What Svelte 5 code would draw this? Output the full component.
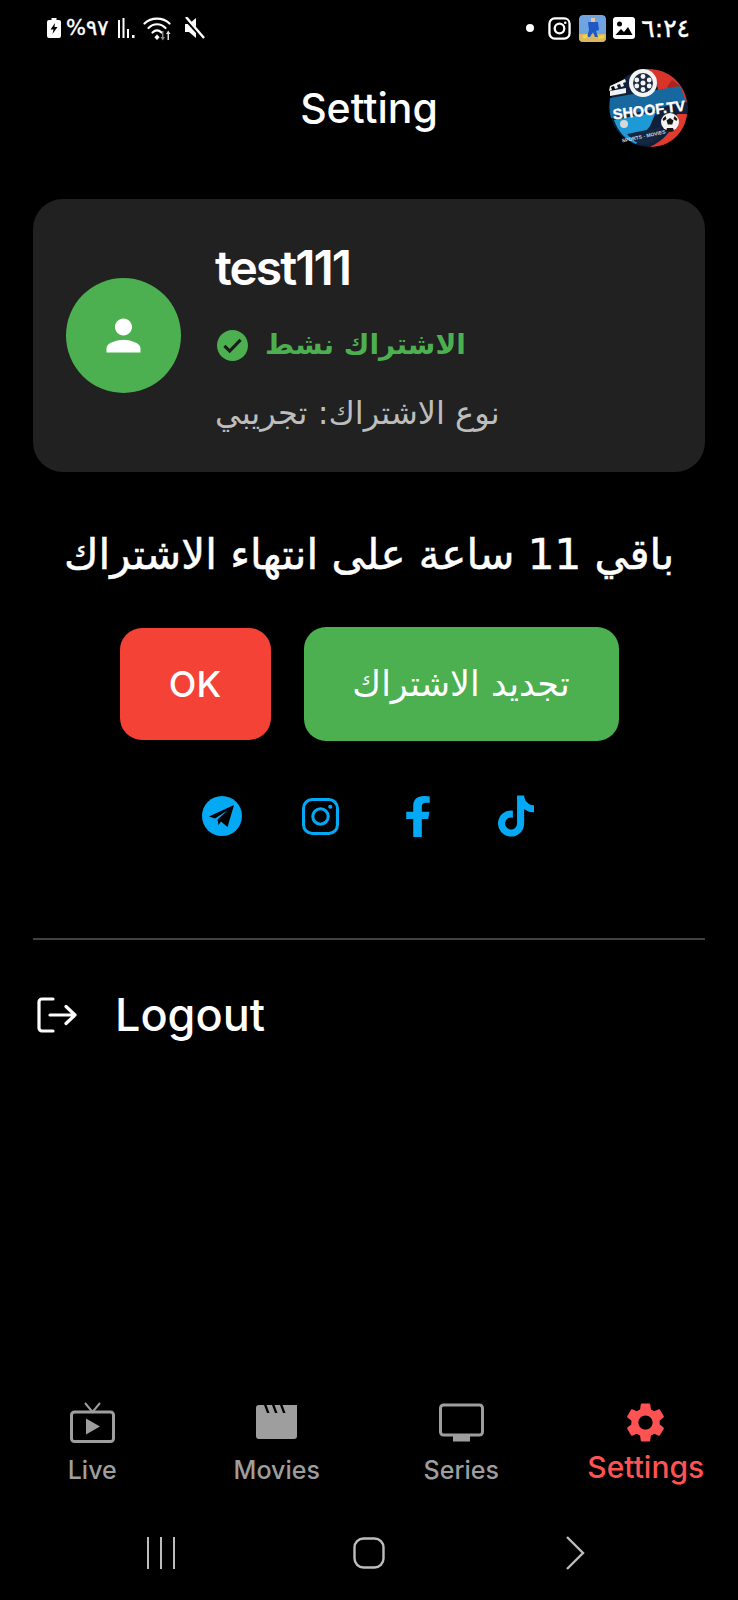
<script lang="ts">
  const tabs = [
    { id: 'live', label: 'Live' },
    { id: 'movies', label: 'Movies' },
    { id: 'series', label: 'Series' },
    { id: 'settings', label: 'Settings' }
  ];
  let active = $state('settings');
</script>

<div class="page">
  <div class="status">
    <div class="status-side">
      <svg class="batt" viewBox="0 0 14 20" aria-hidden="true">
        <path fill="#fff" d="M4.500 0h5v2H12a2 2 0 0 1 2 2v14a2 2 0 0 1-2 2H2a2 2 0 0 1-2-2V4a2 2 0 0 1 2-2h2.500z" />
        <path fill="#000" d="M8 5 3.500 11.500H6.500L5.500 16 10.500 9H7.500z" />
      </svg>
      <span class="pct">%٩٧</span>
      <svg class="sig" viewBox="0 0 18 20" aria-hidden="true">
        <path fill="#fff" d="M0 2h2v18H0zM4.500 0h2v20h-2zM9 11h2v9H9zM14 17h2.500v3H14z" />
      </svg>
      <svg class="wifi" viewBox="0 0 32 26" aria-hidden="true">
        <g fill="none" stroke="#fff" stroke-width="2.200" stroke-linecap="round">
          <path d="M1.500 8.500C8 2 20 2 26.500 8.500" />
          <path d="M5.500 13C10.500 8 17.500 8 22.500 13" />
          <path d="M9.500 17.500c3-2.800 6-2.800 9 0" />
        </g>
        <path fill="#fff" d="M14 19.500l2.600 2.800-2.600 2.700-2.600-2.700z" />
        <path fill="#888" d="M19 16h1.500v6h1.500l-2.200 3.500L17.500 22H19z" />
        <path fill="#ddd" d="M26 25h-1.500v-6H23l2.200-3.500 2.300 3.500H26z" />
      </svg>
      <svg class="mute" viewBox="0 0 22 22" aria-hidden="true">
        <path fill="#fff" d="M2 7h4l7-6v20l-7-6H2z" />
        <path stroke="#000" stroke-width="4" d="M1 0l20 22" />
        <path stroke="#fff" stroke-width="2.400" d="M3 0l18 21" />
      </svg>
    </div>
    <div class="status-side">
      <span class="dot"></span>
      <svg class="sb-insta" viewBox="0 0 24 24" aria-hidden="true">
        <rect x="1.500" y="1.500" width="21" height="21" rx="5.500" fill="none" stroke="#fff" stroke-width="2.400" />
        <circle cx="12" cy="12" r="5" fill="none" stroke="#fff" stroke-width="2.400" />
        <circle cx="18" cy="6" r="1.300" fill="#fff" />
      </svg>
      <svg class="thumb" viewBox="0 0 27 27" aria-hidden="true">
        <rect width="27" height="27" rx="4" fill="#6fa4e0" />
        <rect y="19" width="27" height="8" fill="#d9b860" />
        <path fill="#e8c8a0" d="M12 3h4v4h-4z" />
        <path fill="#1f58c4" d="M9 7h10l1 8-3 1 2 6h-3l-2-5-3 5H8l2-7z" />
        <path fill="#f3d34a" d="M3 21l5-2 1 3-4 2zM19 21l6-1v3l-5 1z" />
      </svg>
      <svg class="pic" viewBox="0 0 22 22" aria-hidden="true">
        <rect width="22" height="22" rx="3" fill="#fff" />
        <circle cx="6.500" cy="7" r="2.500" fill="#000" />
        <path fill="#000" d="M2.500 18l5.500-6 3 3 4-5 4.500 8z" />
      </svg>
      <span class="clock">٦:٢٤</span>
    </div>
  </div>

  <header class="top">
    <span></span>
    <h1>Setting</h1>
    <svg class="logo" viewBox="0 0 82 84" aria-label="Shoof TV">
      <circle cx="41" cy="42" r="39" fill="#10203a" />
      <path fill="#d9332a" d="M38 3c22-1 38 14 41 33L50 38C52 22 48 10 38 3z" />
      <path fill="#e23a2c" d="M79 48c-2 18-16 33-37 33 13-6 24-17 27-33z" />
      <path fill="#a92420" d="M64 14l8 6-5 6-8-5z" />
      <path fill="#17689f" d="M2 32l70-12 6 16-75 16c-2-7-2-13-1-20z" />
      <path fill="#1d9ad6" d="M6 54l42-8-6 14-14 18C18 74 10 66 6 54z" />
      <path fill="#142640" d="M19 68l34-7-3 12-12 6c-8-1-14-5-19-11z" />
      <circle cx="35" cy="17" r="14" fill="#f4f4f4" />
      <circle cx="35" cy="17" r="10" fill="#1b2a40" />
      <g fill="#f4f4f4">
        <circle cx="35" cy="17" r="2.500" />
        <circle cx="35" cy="10.500" r="2.400" />
        <circle cx="35" cy="23.500" r="2.400" />
        <circle cx="28.800" cy="14" r="2.400" />
        <circle cx="41.200" cy="14" r="2.400" />
        <circle cx="28.800" cy="20" r="2.400" />
        <circle cx="41.200" cy="20" r="2.400" />
      </g>
      <path fill="#f1f1f1" d="M2 20l15-7 1 3-3 1 1 3-3 1-1-3-3 1 1 3-3 1-1-3-3 1 1 3-3 1zM2 25l16-3v5L2 30z" />
      <circle cx="16" cy="58" r="4" fill="#d8d8d8" />
      <circle cx="62" cy="56" r="9" fill="#f4f4f4" />
      <path fill="#151515" d="M62 52l3.500 2.500-1.300 4h-4.400l-1.300-4zM54.500 53l3-3 1 3-3 2zM69.500 53l-3-3-1 3 3 2zM58 65l1-3h6l1 3-4 1z" />
      <text class="logo-text" x="41" y="49" transform="rotate(-7 41 44)" text-anchor="middle">SHOOF.TV</text>
      <text class="logo-sub" x="36" y="72" transform="rotate(-12 36 72)" text-anchor="middle">SPORTS - MOVIES</text>
    </svg>
  </header>

  <section class="card">
    <div class="avatar">
      <svg viewBox="0 0 24 24" aria-hidden="true">
        <path fill="#fff" d="M12 12c2.210 0 4-1.790 4-4s-1.790-4-4-4-4 1.790-4 4 1.790 4 4 4zm0 2c-2.670 0-8 1.340-8 4v2h16v-2c0-2.660-5.330-4-8-4z" />
      </svg>
    </div>
    <div class="info">
      <div class="name">test111</div>
      <div class="state">
        <svg viewBox="2 2 20 20" aria-hidden="true">
          <path fill="#4caf50" d="M12 2C6.480 2 2 6.480 2 12s4.480 10 10 10 10-4.480 10-10S17.520 2 12 2z" />
          <path fill="none" stroke="#1c1c1c" stroke-width="2" d="M6.800 12.200l3.400 3.400 7-7.200" />
        </svg>
        <span dir="rtl">الاشتراك نشط</span>
      </div>
      <div class="kind" dir="rtl">نوع الاشتراك: تجريبي</div>
    </div>
  </section>

  <p class="remain" dir="rtl">باقي 11 ساعة على انتهاء الاشتراك</p>

  <div class="actions">
    <button type="button" class="ok">OK</button>
    <button type="button" class="renew" dir="rtl">تجديد الاشتراك</button>
  </div>

  <div class="social">
    <svg class="s-tg" viewBox="0 0 40 40" aria-label="Telegram">
      <circle cx="20" cy="20" r="20" fill="#03a9f4" />
      <path fill="#000" d="M7 20.500 32 9 25.500 31 19 25.500 16.500 29 15.500 23.500 26 14 13 22.500z" />
    </svg>
    <svg class="s-ig" viewBox="0 0 36 36" aria-label="Instagram">
      <rect x="1.500" y="1.500" width="33" height="33" rx="8.500" fill="none" stroke="#03a9f4" stroke-width="3" />
      <circle cx="18" cy="18" r="7.500" fill="none" stroke="#03a9f4" stroke-width="3" />
      <circle cx="27.500" cy="8.500" r="2" fill="#03a9f4" />
    </svg>
    <svg class="s-fb" viewBox="20 0 280 512" preserveAspectRatio="none" aria-label="Facebook">
      <path fill="#03a9f4" d="M279.140 288l14.220-92.660h-88.910v-60.130c0-25.350 12.420-50.060 52.240-50.060h40.420V6.260S260.430 0 225.360 0c-73.220 0-121.080 44.380-121.080 124.720v70.620H22.890V288h81.390v224h100.170V288z" />
    </svg>
    <svg class="s-tt" viewBox="0 0 448 512" aria-label="TikTok">
      <path fill="#03a9f4" d="M448 209.910a210.060 210.060 0 0 1-122.770-39.250V349.380A162.550 162.550 0 1 1 185 188.310V278.200a74.620 74.620 0 1 0 52.230 71.180V0l88 0a121.180 121.180 0 0 0 1.860 22.170h0A122.180 122.180 0 0 0 381 102.390a121.430 121.430 0 0 0 67 20.140Z" />
    </svg>
  </div>

  <hr />

  <button type="button" class="logout">
    <svg viewBox="0 0 40 36" aria-hidden="true">
      <g fill="none" stroke="#fff" stroke-width="3.200" stroke-linecap="round" stroke-linejoin="round">
        <path d="M16 2H5a3 3 0 0 0-3 3v26a3 3 0 0 0 3 3h11" />
        <path d="M13 18h25M29 9.500l9 8.500-9 8.500" />
      </g>
    </svg>
    <span>Logout</span>
  </button>

  <nav class="tabs">
    {#each tabs as tab}
      <button type="button" class="tab" class:on={active === tab.id} onclick={() => (active = tab.id)}>
        {#if tab.id === 'live'}
          <svg viewBox="0 0 45 41" aria-hidden="true">
            <path fill="none" stroke="currentColor" stroke-width="2" d="M15 1l7.500 9L30 1" />
            <rect x="1.500" y="10" width="42" height="29.500" rx="3" fill="none" stroke="currentColor" stroke-width="3" />
            <path fill="currentColor" d="M16 16.500l14 8-14 8z" />
          </svg>
        {:else if tab.id === 'movies'}
          <svg viewBox="-2 -3 45 41" aria-hidden="true">
            <path fill="currentColor" d="M3 0H8L11 8H13.500L10.500 0H16L19 8H21.500L18.500 0H24L27 8H29.500L26.500 0H41V31a3 3 0 0 1-3 3H3a3 3 0 0 1-3-3V3a3 3 0 0 1 3-3z" />
          </svg>
        {:else if tab.id === 'series'}
          <svg viewBox="0 0 45 38" aria-hidden="true">
            <rect x="1.500" y="1.500" width="42" height="30" rx="3" fill="none" stroke="currentColor" stroke-width="3" />
            <rect x="14" y="32" width="17" height="6" fill="currentColor" />
          </svg>
        {:else}
          <svg viewBox="2.300 1.600 19.400 20.800" aria-hidden="true">
            <path fill="currentColor" d="M19.140 12.940c.04-.3.06-.61.06-.94 0-.32-.02-.64-.07-.94l2.030-1.580c.18-.14.23-.41.12-.61l-1.920-3.320c-.12-.22-.37-.29-.59-.22l-2.390.96c-.5-.38-1.030-.7-1.620-.94l-.36-2.540c-.04-.24-.24-.41-.48-.41h-3.840c-.24 0-.43.17-.47.41l-.36 2.540c-.59.24-1.130.57-1.620.94l-2.390-.96c-.22-.08-.47 0-.59.22L2.740 8.870c-.12.21-.08.47.12.61l2.030 1.580c-.05.3-.09.63-.09.94s.02.64.07.94l-2.030 1.580c-.18.14-.23.41-.12.61l1.920 3.320c.12.22.37.29.59.22l2.390-.96c.5.38 1.030.7 1.620.94l.36 2.540c.05.24.24.41.48.41h3.840c.24 0 .44-.17.47-.41l.36-2.540c.59-.24 1.130-.56 1.620-.94l2.390.96c.22.08.47 0 .59-.22l1.920-3.320c.12-.22.07-.47-.12-.61l-2.010-1.580zM12 15.600c-1.980 0-3.600-1.620-3.600-3.600s1.620-3.600 3.600-3.600 3.600 1.620 3.600 3.600-1.620 3.600-3.600 3.600z" />
          </svg>
        {/if}
        <span>{tab.label}</span>
      </button>
    {/each}
  </nav>

  <div class="sysnav">
    <svg class="sys-bars" viewBox="0 0 30 32" aria-hidden="true">
      <path stroke="#bdbdbd" stroke-width="2" d="M2 0v32M15 0v32M28 0v32" />
    </svg>
    <svg class="sys-home" viewBox="0 0 32 32" aria-hidden="true">
      <rect x="1.500" y="1.500" width="29" height="29" rx="9" fill="none" stroke="#bdbdbd" stroke-width="2.400" />
    </svg>
    <svg class="sys-back" viewBox="0 0 20 34" aria-hidden="true">
      <path fill="none" stroke="#bdbdbd" stroke-width="2.400" d="M2 1l16 16L2 33" />
    </svg>
  </div>
</div>

<style>
  :global(body) {
    margin: 0;
    background: #000;
  }

  .page {
    display: flex;
    flex-direction: column;
    height: 1600px;
    width: 738px;
    background: #000;
    color: #fff;
    font-family: Inter, 'DejaVu Sans', sans-serif;
    overflow: hidden;
  }

  .status {
    display: flex;
    justify-content: space-between;
    align-items: center;
    height: 56px;
    padding: 0 48px 0 47px;
  }
  .status-side {
    display: flex;
    align-items: center;
  }
  .batt { width: 14px; height: 20px; margin-right: 5px; }
  .pct, .clock {
    font-family: 'DejaVu Sans', sans-serif;
    font-size: 21px;
    line-height: 1;
    -webkit-text-stroke: 0.4px #fff;
  }
  .sig { width: 18px; height: 20px; margin: 0 7px 0 9px; }
  .wifi { width: 32px; height: 26px; }
  .mute { width: 22px; height: 22px; margin-left: 8px; }
  .dot { width: 8px; height: 8px; border-radius: 50%; background: #fff; margin-right: 14px; }
  .sb-insta { width: 23px; height: 23px; }
  .thumb { width: 27px; height: 27px; margin-left: 8px; border-radius: 4px; }
  .pic { width: 22px; height: 22px; margin-left: 7px; }
  .clock { margin-left: 6px; font-size: 25px; }

  .top {
    display: grid;
    grid-template-columns: 1fr auto 1fr;
    align-items: center;
    height: 104px;
    padding: 0 48px;
  }
  .top h1 {
    margin: 0;
    font-size: 41px;
    font-weight: 500;
    line-height: 1;
  }
  .logo {
    justify-self: end;
    width: 82px;
    height: 84px;
  }
  .logo-text {
    font-family: 'Liberation Sans', sans-serif;
    font-size: 14.500px;
    font-weight: 700;
    fill: #fff;
    stroke: #fff;
    stroke-width: 0.4px;
  }
  .logo-sub {
    font-family: 'Liberation Sans', sans-serif;
    font-size: 5px;
    font-weight: 700;
    fill: #cfd8e0;
  }

  .card {
    display: flex;
    align-items: center;
    gap: 34px;
    box-sizing: border-box;
    height: 273px;
    margin: 39px 33px 0;
    padding: 0 33px;
    background: #212121;
    border-radius: 30px;
  }
  .avatar {
    display: flex;
    align-items: center;
    justify-content: center;
    width: 115px;
    height: 115px;
    border-radius: 50%;
    background: #4caf50;
    flex: none;
  }
  .avatar svg { width: 51px; height: 51px; }
  .info {
    display: flex;
    flex-direction: column;
    align-items: flex-start;
  }
  .name {
    font-size: 48px;
    font-weight: 600;
    line-height: 60px;
    letter-spacing: -2px;
  }
  .state {
    display: flex;
    align-items: center;
    gap: 17px;
    margin-top: 27px;
    color: #4caf50;
    font-size: 28px;
    font-weight: 600;
    line-height: 40px;
    font-family: 'DejaVu Sans', sans-serif;
  }
  .state svg { width: 31px; height: 31px; margin-left: 2px; }
  .kind {
    margin-top: 28px;
    color: #bdbdbd;
    font-family: 'DejaVu Sans', sans-serif;
    font-size: 32px;
    line-height: 40px;
  }

  .remain {
    margin: 58px 0 0;
    text-align: center;
    font-family: 'DejaVu Sans', sans-serif;
    font-size: 42px;
    line-height: 50px;
    -webkit-text-stroke: 0.5px #fff;
  }

  .actions {
    display: flex;
    justify-content: center;
    align-items: center;
    gap: 33px;
    margin-top: 47px;
  }
  .actions button {
    border: 0;
    color: #fff;
    padding: 0;
    border-radius: 22px;
  }
  .ok {
    width: 151px;
    height: 112px;
    background: #f44336;
    font-family: Inter, sans-serif;
    font-size: 36px;
    font-weight: 500;
  }
  .renew {
    width: 315px;
    height: 114px;
    background: #4caf50;
    font-family: 'DejaVu Sans', sans-serif;
    font-size: 35px;
  }

  .social {
    display: grid;
    grid-template-columns: repeat(4, 98px);
    justify-content: center;
    justify-items: center;
    align-items: center;
    margin-top: 54px;
    height: 42px;
  }
  .s-tg { width: 40px; height: 40px; }
  .s-ig { width: 37px; height: 37px; }
  .s-fb { width: 24px; height: 41px; }
  .s-tt { width: 36px; height: 42px; }

  hr {
    border: 0;
    height: 2px;
    margin: 101px 33px 0;
    background: #424242;
  }

  .logout {
    display: flex;
    align-items: center;
    gap: 38px;
    margin: 41px 0 0 37px;
    padding: 0;
    background: none;
    border: 0;
    color: #fff;
    font-family: Inter, sans-serif;
    font-size: 45px;
    font-weight: 500;
    line-height: 68px;
    align-self: flex-start;
  }
  .logout svg { width: 40px; height: 36px; }

  .tabs {
    display: grid;
    grid-template-columns: repeat(4, 1fr);
    margin-top: auto;
  }
  .tab {
    display: flex;
    flex-direction: column;
    align-items: center;
    padding: 0;
    height: 100px;
    background: none;
    border: 0;
    color: #9e9e9e;
    font-family: Inter, sans-serif;
    font-size: 25px;
    font-weight: 500;
  }
  .tab svg { width: 45px; height: 41px; }
  .tab span { margin-top: 10px; line-height: 34px; }
  .tab.on { color: #ff5252; font-size: 30px; }
  .tab.on span { margin-top: 4px; line-height: 40px; }

  .sysnav {
    display: grid;
    grid-template-columns: repeat(3, 1fr);
    justify-items: center;
    align-items: center;
    height: 64px;
    margin: 19px 0 15px;
  }
  .sys-bars { width: 30px; height: 32px; transform: translateX(38px); }
  .sys-home { width: 32px; height: 32px; }
  .sys-back { width: 20px; height: 34px; transform: translateX(-40px); }
</style>
